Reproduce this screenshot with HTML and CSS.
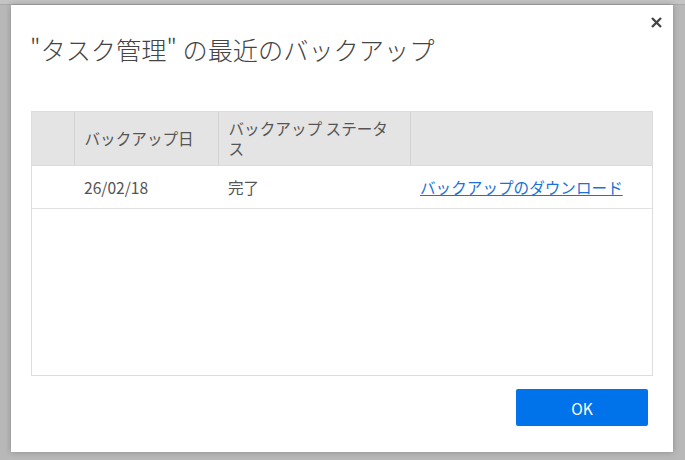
FILE: index.html
```html
<!DOCTYPE html>
<html lang="ja">
<head>
<meta charset="utf-8">
<link rel="stylesheet" href="styles.css">
</head>
<body>
<div class="backdrop-strip"></div>
<div class="dialog">
  <button class="close" aria-label="閉じる">
    <svg width="11" height="11" viewBox="0 0 11 11"><path d="M1 1L10 10M10 1L1 10" stroke="#444" stroke-width="2.3" fill="none"/></svg>
  </button>
  <h1 class="title">"タスク管理" の最近のバックアップ</h1>
  <div class="grid-box">
    <table class="grid">
      <colgroup>
        <col class="c1"><col class="c2"><col class="c3"><col>
      </colgroup>
      <thead>
        <tr>
          <th></th>
          <th>バックアップ日</th>
          <th>バックアップ ステータス</th>
          <th class="last"></th>
        </tr>
      </thead>
      <tbody>
        <tr>
          <td></td>
          <td>26/02/18</td>
          <td>完了</td>
          <td><a href="#" class="link">バックアップのダウンロード</a></td>
        </tr>
      </tbody>
    </table>
  </div>
  <div class="footer">
    <button class="ok">OK</button>
  </div>
</div>
</body>
</html>
```
FILE: styles.css
```css
html, body {
  margin: 0;
  padding: 0;
}
body {
  background: #b8b8b8;
  width: 685px;
  height: 460px;
  overflow: hidden;
  padding: 0 0 0 11px;
  box-sizing: border-box;
  font-family: "Noto Sans CJK JP", "Noto Sans", sans-serif;
}
.backdrop-strip {
  height: 4px;
  margin-left: -11px;
  background: #c4c4c4;
  border-bottom: 1px solid #a8a8a8;
}
.dialog {
  position: relative;
  width: 662px;
  height: 447px;
  background: #fff;
  box-sizing: border-box;
  padding: 24px 20px 26px 20px;
  box-shadow: 0 0 6px rgba(0,0,0,0.25);
  display: flex;
  flex-direction: column;
}
.close {
  position: absolute;
  top: 12px;
  right: 11px;
  width: 11px;
  height: 11px;
  padding: 0;
  border: 0;
  background: none;
  display: flex;
}
.title {
  margin: 0 0 0 -1px;
  font-size: 25.2px;
  line-height: 40px;
  font-weight: 300;
  color: #444;
}
.grid-box {
  margin-top: 42px;
  height: 265px;
  border: 1px solid #dcdcdc;
  box-sizing: border-box;
}
.grid {
  width: 100%;
  border-collapse: collapse;
  table-layout: fixed;
  font-size: 15.6px;
  color: #555;
}
.c1 { width: 42px; }
.c2 { width: 144px; }
.c3 { width: 192px; }
.grid th {
  background: #e4e4e4;
  font-weight: 400;
  text-align: left;
  line-height: 20px;
  padding: 6px 10px;
  height: 53px;
  box-sizing: border-box;
  border-right: 1px solid #d2d2d2;
  border-bottom: 1px solid #dadada;
  vertical-align: middle;
}
.grid th.last {
  border-right: 0;
}
.grid td {
  height: 42px;
  padding: 0 10px;
  border-bottom: 1px solid #e2e2e2;
  line-height: 20px;
  vertical-align: middle;
}
.link {
  color: #1a72d8;
  text-decoration: underline;
}
.footer {
  margin-top: 13px;
  display: flex;
  justify-content: flex-end;
  padding-right: 5px;
}
.ok {
  width: 132px;
  height: 37px;
  background: #0073ea;
  border: 0;
  border-radius: 2px;
  color: #fff;
  font-family: "Noto Sans CJK JP", "Noto Sans", sans-serif;
  font-size: 15.6px;
}
```
